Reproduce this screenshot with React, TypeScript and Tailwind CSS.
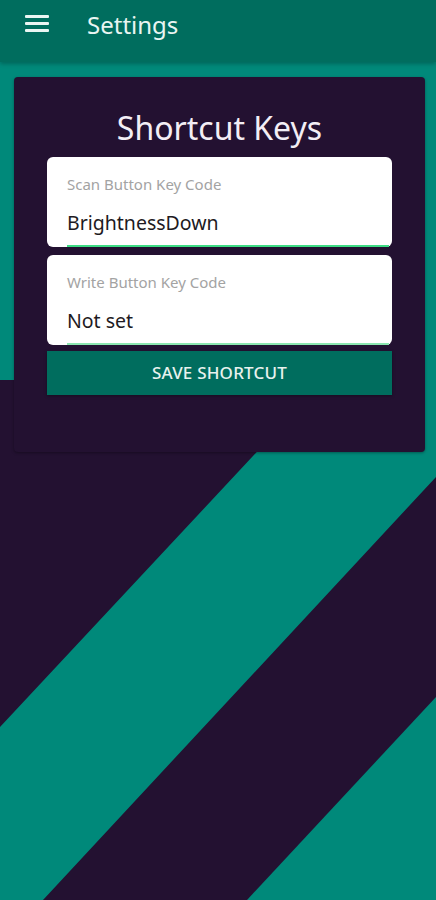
import React from "react";

const font = { fontFamily: '"Noto Sans", "Open Sans", sans-serif' };

const Backdrop = () => (
  <svg
    className="absolute inset-0 w-full h-full"
    viewBox="0 0 436 900"
    preserveAspectRatio="none"
    aria-hidden="true"
  >
    <rect width="436" height="900" fill="#231131" />
    <polygon
      points="0,62 436,62 436,477 43,900 0,900 0,727 324,380 0,380"
      fill="#00897a"
    />
    <polygon points="436,697 436,900 247,900" fill="#00897a" />
  </svg>
);

const KeyField = ({ label, value, line }: { label: string; value: string; line: string }) => (
  <div className="bg-white rounded-[6px] h-[90px] flex flex-col">
    <div className={`flex-1 ml-[20px] mr-[3px] flex flex-col border-b-2 ${line}`}>
      <span className="text-[15px] text-[#a3a3a3] mt-[15px] leading-[24px]">{label}</span>
      <span className="text-[19.5px] text-[#1e1a22] mt-[13px] leading-[28px]">{value}</span>
    </div>
  </div>
);

export default function App() {
  return (
    <div className="relative min-h-[900px] w-full overflow-hidden" style={font}>
      <Backdrop />
      <header className="relative z-10 h-[62px] bg-[#006d5e] shadow-[0_2px_4px_rgba(0,0,0,0.25)] flex items-start pt-[15px]">
        <button className="ml-[25px] w-[24px] h-[17px] flex flex-col justify-between">
          <span className="block h-[3px] w-full bg-[#eaf6f3] rounded-[1px]" />
          <span className="block h-[3px] w-full bg-[#eaf6f3] rounded-[1px]" />
          <span className="block h-[3px] w-full bg-[#eaf6f3] rounded-[1px]" />
        </button>
        <h1 className="ml-[38px] text-[24px] text-[#e9f5f2] leading-[18px] mt-[1px]">Settings</h1>
      </header>

      <main className="relative pt-[15px] pl-[14px] pr-[11px]">
        <section className="bg-[#231131] rounded-[4px] shadow-[0_1px_3px_rgba(0,0,0,0.35)] px-[33px] pt-[22px] pb-[57px]">
          <h2 className="h-[58px] flex items-center justify-center text-[32px] text-[#f3eef5]">
            Shortcut Keys
          </h2>
          <div className="flex flex-col gap-[8px]">
            <KeyField label="Scan Button Key Code" value="BrightnessDown" line="border-[#3ddc84]" />
            <KeyField label="Write Button Key Code" value="Not set" line="border-[#8be6b0]" />
          </div>
          <button className="mt-[6px] w-full h-[44px] bg-[#006d5e] shadow-[0_1px_3px_rgba(0,0,0,0.35)] text-[#e8f2ee] text-[17px] font-medium tracking-[0.2px]">
            SAVE SHORTCUT
          </button>
        </section>
      </main>
    </div>
  );
}
